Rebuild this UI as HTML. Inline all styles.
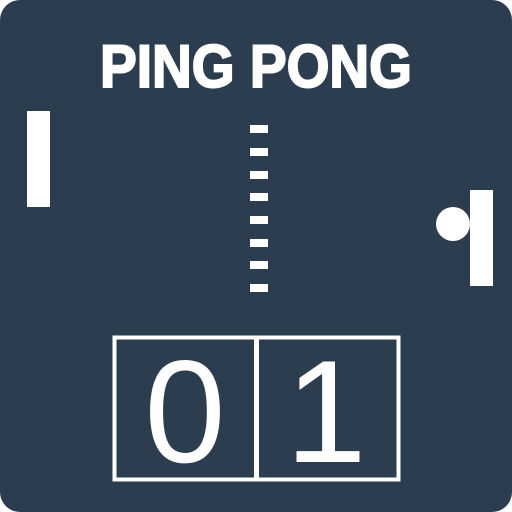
<!DOCTYPE html>
<html><head><style>
html,body{margin:0;padding:0;background:#fff;width:512px;height:512px;overflow:hidden}
</style></head><body>
<svg width="512" height="512" viewBox="0 0 512 512" xmlns="http://www.w3.org/2000/svg">
<rect x="0" y="0" width="512" height="512" rx="20" fill="#2d3d50"/>
<text x="256" y="87" text-anchor="middle" font-family="Liberation Sans, sans-serif" font-weight="bold" font-size="60" fill="#fff" stroke="#fff" stroke-width="2" textLength="312" lengthAdjust="spacingAndGlyphs">PING PONG</text>
<rect x="27" y="111" width="23" height="96" fill="#fff"/>
<rect x="470" y="190" width="23" height="96" fill="#fff"/>
<circle cx="453" cy="224" r="17" fill="#fff"/>
<g fill="#fff">
<rect x="250" y="125" width="18" height="8"/>
<rect x="250" y="148" width="18" height="8"/>
<rect x="250" y="171" width="18" height="8"/>
<rect x="250" y="193" width="18" height="8"/>
<rect x="250" y="216" width="18" height="8"/>
<rect x="250" y="239" width="18" height="8"/>
<rect x="250" y="261" width="18" height="8"/>
<rect x="250" y="284" width="18" height="8"/>
</g>
<rect x="114.5" y="337.5" width="284" height="142" fill="none" stroke="#fff" stroke-width="4"/>
<rect x="254" y="337" width="5" height="143" fill="#fff"/>
<text x="185" y="462" text-anchor="middle" font-family="Liberation Sans, sans-serif" font-size="146" fill="#fff">0</text>
<text x="326" y="462" text-anchor="middle" font-family="Liberation Sans, sans-serif" font-size="146" fill="#fff">1</text>
</svg>
</body></html>
